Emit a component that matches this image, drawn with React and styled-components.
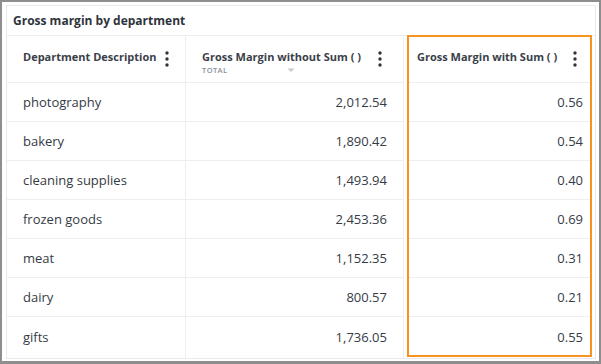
import React from 'react';
import styled, { createGlobalStyle } from 'styled-components';

const GlobalStyle = createGlobalStyle`
  html, body {
    margin: 0;
    padding: 0;
    background: #ffffff;
  }
  body {
    font-family: "Open Sans", "Liberation Sans", sans-serif;
    color: #353b45;
  }
  * { box-sizing: border-box; }
`;

const Frame = styled.div`
  width: 601px;
  height: 364px;
  border: 2px solid #8e8e8e;
  border-bottom-width: 3px;
  padding: 3px 3px 2px 4px;
  background: #ffffff;
`;

const Card = styled.div`
  height: 100%;
  border: 1px solid #e6e9ed;
  display: flex;
  flex-direction: column;
`;

const Title = styled.div`
  height: 30px;
  flex-shrink: 0;
  display: flex;
  align-items: center;
  padding-left: 6px;
  font-size: 12px;
  font-weight: 700;
  color: #2f343b;
  border-bottom: 1px solid #eceef1;
`;

const Table = styled.div`
  flex: 1;
  display: flex;
`;

const Column = styled.div`
  width: ${p => p.$width}px;
  flex-shrink: 0;
  display: flex;
  flex-direction: column;
  border-right: ${p => (p.$divider ? '1px solid #eceef1' : 'none')};
`;

const HighlightColumn = styled.div`
  width: 185px;
  flex-shrink: 0;
  margin: -1px 0 0 3px;
  border: 2px solid #f7931e;
  display: flex;
  flex-direction: column;
  height: 322px;
`;

const Header = styled.div`
  height: ${p => (p.$highlight ? 46 : 47)}px;
  flex-shrink: 0;
  display: flex;
  align-items: flex-start;
  justify-content: space-between;
  padding: ${p => p.$pad};
  border-bottom: 1px solid #eceef1;
`;

const HeaderText = styled.div`
  display: flex;
  flex-direction: column;
`;

const HeaderLabel = styled.span`
  font-size: 11px;
  font-weight: 700;
  color: #3a4049;
  line-height: 16px;
  white-space: nowrap;
`;

const SubRow = styled.div`
  display: flex;
  align-items: center;
  gap: 60px;
`;

const SubLabel = styled.span`
  font-size: 7.5px;
  font-weight: 600;
  letter-spacing: 0.4px;
  color: #8a9099;
  line-height: 10px;
`;

const Cell = styled.div`
  height: 39px;
  flex-shrink: 0;
  display: flex;
  align-items: center;
  justify-content: ${p => (p.$numeric ? 'flex-end' : 'flex-start')};
  padding: ${p => (p.$numeric ? '0 16px 0 0' : '0 0 0 16px')};
  font-size: 13px;
  color: #353b45;
  border-bottom: ${p => (p.$last ? 'none' : '1px solid #eceef1')};
`;

const HighlightCell = styled(Cell)`
  padding-right: 7px;
`;

const Kebab = () => (
  <svg width="4" height="16" viewBox="0 0 4 16" style={{ marginTop: 2, flexShrink: 0 }}>
    <circle cx="2" cy="2" r="1.7" fill="#2f343b" />
    <circle cx="2" cy="8" r="1.7" fill="#2f343b" />
    <circle cx="2" cy="14" r="1.7" fill="#2f343b" />
  </svg>
);

const Caret = () => (
  <svg width="8" height="5" viewBox="0 0 8 5">
    <path d="M0.5 0.5 L4 4 L7.5 0.5 Z" fill="#c6cad0" />
  </svg>
);

const rows = [
  ['photography', '2,012.54', '0.56'],
  ['bakery', '1,890.42', '0.54'],
  ['cleaning supplies', '1,493.94', '0.40'],
  ['frozen goods', '2,453.36', '0.69'],
  ['meat', '1,152.35', '0.31'],
  ['dairy', '800.57', '0.21'],
  ['gifts', '1,736.05', '0.55'],
];

export default function App() {
  return (
    <>
      <GlobalStyle />
      <Frame>
        <Card>
          <Title>Gross margin by department</Title>
          <Table>
            <Column $width={179} $divider>
              <Header $pad="13px 16px 0 16px">
                <HeaderLabel>Department Description</HeaderLabel>
                <Kebab />
              </Header>
              {rows.map((r, i) => (
                <Cell key={r[0]} $last={i === rows.length - 1}>{r[0]}</Cell>
              ))}
            </Column>
            <Column $width={218} $divider>
              <Header $pad="13px 21px 0 16px">
                <HeaderText>
                  <HeaderLabel>Gross Margin without Sum ( )</HeaderLabel>
                  <SubRow>
                    <SubLabel>TOTAL</SubLabel>
                    <Caret />
                  </SubRow>
                </HeaderText>
                <Kebab />
              </Header>
              {rows.map((r, i) => (
                <Cell key={r[0]} $numeric $last={i === rows.length - 1}>{r[1]}</Cell>
              ))}
            </Column>
            <HighlightColumn>
              <Header $highlight $pad="12px 13px 0 8px">
                <HeaderLabel>Gross Margin with Sum ( )</HeaderLabel>
                <Kebab />
              </Header>
              {rows.map((r, i) => (
                <HighlightCell key={r[0]} $numeric $last={i === rows.length - 1}>{r[2]}</HighlightCell>
              ))}
            </HighlightColumn>
          </Table>
        </Card>
      </Frame>
    </>
  );
}
